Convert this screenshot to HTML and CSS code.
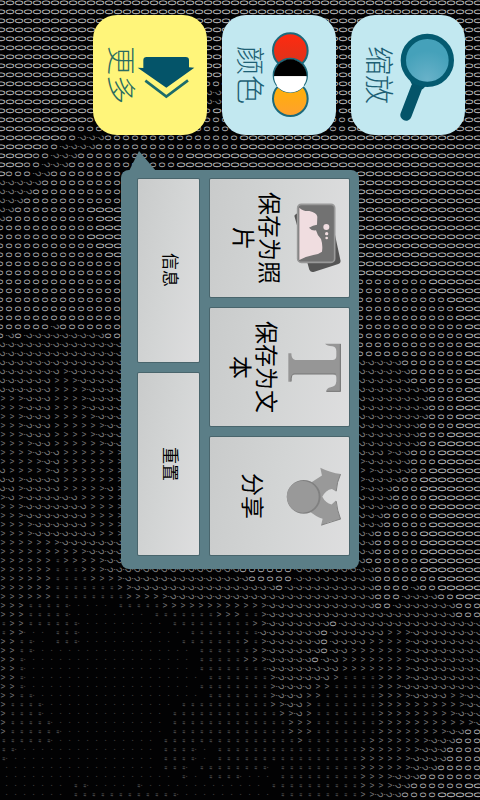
FILE: index.html
```
<!DOCTYPE html>
<html lang="zh-CN">
<head>
    <meta charset="utf-8">
    <meta name="viewport" content="width=device-width, initial-scale=1">
    <title>ASCII 相机</title>
    <link rel="stylesheet" href="styles.css">
</head>
<body>
    <div class="ascii" id="ascii" aria-hidden="true"></div>

    <div class="screen">
        <div class="toolbar">
            <button type="button" class="tool active">
                <span class="tool-label">更多</span>
                <svg class="tool-icon" viewBox="411 90 180 273">
                    <path fill="#045469" d="M430 181q0-10 10-10H557q10 0 10 10V202L583 203 499 263 413 203 430 204z"/>
                    <path fill="none" stroke="#1c6b6b" stroke-width="8" d="M436 242L499 290 564 241"/>
                </svg>
            </button>
            <button type="button" class="tool">
                <span class="tool-label">颜色</span>
                <svg class="tool-icon" viewBox="78 90 180 273">
                    <defs>
                        <linearGradient id="red" x2="0" y2="1"><stop stop-color="#ff2a10"/><stop offset="1" stop-color="#d8341c"/></linearGradient>
                        <linearGradient id="orange" x2="0" y2="1"><stop stop-color="#ffb400"/><stop offset="1" stop-color="#ffa02e"/></linearGradient>
                    </defs>
                    <g stroke="#1c6a7c" stroke-width="6">
                        <circle cx="151" cy="152" r="52" fill="url(#red)"/>
                        <circle cx="151" cy="296" r="52" fill="url(#orange)"/>
                        <circle cx="151" cy="226" r="50" fill="#fff"/>
                    </g>
                    <path fill="#000" d="M102 229a49 51 0 0 1 98 0z"/>
                    <path fill="#fff" d="M102 229a49 47 0 0 0 98 0z"/>
                    <path fill="none" stroke="#fff" stroke-width="8" d="M112 255Q151 291 190 255"/>
                </svg>
            </button>
            <button type="button" class="tool">
                <span class="tool-label">缩放</span>
                <svg class="tool-icon" viewBox="465 90 180 273">
                    <defs>
                        <radialGradient id="lens" cx="0.5" cy="0.9" r="0.6"><stop stop-color="#68b2c9"/><stop offset="1" stop-color="#45a1ba"/></radialGradient>
                    </defs>
                    <path stroke="#045469" stroke-width="34" stroke-linecap="round" d="M530 262L498 345"/>
                    <path fill="#045469" d="M508 238L520 262 548 268 560 255z"/>
                    <circle cx="562" cy="181" r="72" fill="url(#lens)" stroke="#045a70" stroke-width="16"/>
                </svg>
            </button>
        </div>

        <div class="menu">
            <div class="menu-col info">
                <button type="button" class="item small"><span class="item-label">信息</span></button>
                <button type="button" class="item small"><span class="item-label">重置</span></button>
            </div>
            <div class="menu-col">
                <button type="button" class="item">
                    <span class="item-label">保存为照片</span>
                    <svg class="icon-photo" viewBox="552 188 141 210">
                        <path fill="#555" d="M553 226q4-6 12-8L672 270 691 358q3 10-6 13L613 394q-10 4-15-6z"/>
                        <rect x="563" y="192" width="111" height="174" rx="11" fill="#727272" stroke="#999" stroke-width="5"/>
                        <path fill="#f0dde0" d="M568 202q12 12 30 10 22 5 24 17l-1 24q-12 1-24 9 8 10 21 8 4 16 15 26 6 18 3 38-10 8-26 10-24 4-42 15z"/>
                        <circle cx="649" cy="260" r="9" fill="#f0dde0"/>
                        <circle cx="650" cy="280" r="5" fill="#f0dde0"/>
                        <circle cx="650" cy="293" r="4" fill="#f0dde0"/>
                    </svg>
                </button>
                <button type="button" class="item">
                    <span class="item-label">保存为文本</span>
                    <svg class="icon-text" viewBox="534 607 159 147">
                        <path fill="#969696" d="M693 609V753H648q2-11 14-13 16-2 17-18v-11q0-11-12-11H556q-11 0-12 10v13h-9V638h9q0 18 12 20H667q12 0 12-12v-14q0-13-12-15-16-2-22-8z"/>
                        <path fill="none" stroke="#777" stroke-width="3" d="M691 610V752H650M677 700H552q-9 0-9 22"/>
                    </svg>
                </button>
                <button type="button" class="item">
                    <span class="item-label">分享</span>
                    <svg class="icon-share" viewBox="527 317 165 178">
                        <path fill="#999" d="M590 372Q612 358 635 343L630 319Q660 334 692 338 680 362 678 391L665 383Q646 386 636 407 646 426 664 430L677 418Q680 448 692 475 660 480 632 494L637 473Q615 466 595 448z"/>
                        <path fill="none" stroke="#808080" stroke-width="3" d="M691 339Q680 362 678 390M678 420Q681 448 691 474L634 492"/>
                        <circle cx="580" cy="407" r="51" fill="#808080"/>
                        <circle cx="577" cy="407" r="48" fill="#999"/>
                    </svg>
                </button>
            </div>
        </div>
    </div>

    <script src="ascii.js"></script>
</body>
</html>
```
FILE: styles.css
```
* {
    box-sizing: border-box;
}

body {
    margin: 0;
    min-height: 100vh;
    background: #020203;
    font-family: "Noto Sans CJK SC", "Noto Sans", sans-serif;
    overflow: hidden;
}

button {
    border: none;
    padding: 0;
    font-family: inherit;
    cursor: pointer;
}

/* camera view made of characters, lies under everything */
.ascii {
    position: absolute;
    top: -2px;
    left: -4px;
    display: grid;
    grid-template-columns: repeat(54, 9px);
    grid-auto-rows: 9px;
    font-family: "Liberation Sans", sans-serif;
    font-size: 10px;
    line-height: 9px;
}

.ascii span {
    writing-mode: vertical-rl;
    text-orientation: sideways;
    text-align: center;
}

.ascii .W {
    color: #c6c6c8;
    font-family: "Liberation Sans Narrow", "Liberation Sans", sans-serif;
}

.ascii .o { color: #b0b0b2; }
.ascii .q { color: #808080; }
.ascii .v { color: #747474; }
.ascii .e { color: #545454; }
.ascii .d { color: #3c3c3c; }

.screen {
    position: relative;
    display: flex;
    flex-direction: column;
    align-items: flex-end;
    gap: 35px;
    padding: 15px;
}

.toolbar {
    display: flex;
    gap: 15px;
}

.tool {
    display: flex;
    align-items: center;
    width: 114px;
    height: 120px;
    padding-left: 15px;
    border-radius: 24px;
    background: #c2e8f0;
    color: #1d6074;
}

.tool.active {
    background: #fff57a;
    color: #2a6c60;
}

.tool-label,
.item-label {
    writing-mode: vertical-rl;
    text-orientation: sideways;
}

.tool-label {
    font-size: 29px;
    line-height: 29px;
    font-weight: 300;
}

.tool-icon {
    width: 60px;
    height: 91px;
}

.menu {
    position: relative;
    display: flex;
    gap: 11px;
    margin-right: 106px;
    padding: 9px 10px 14px 17px;
    border-radius: 8px;
    background: #5b7e87;
}

.menu::before {
    content: "";
    position: absolute;
    top: -19px;
    left: 8px;
    border: solid transparent;
    border-width: 0 17px 20px 10px;
    border-bottom-color: #5b7e87;
}

.menu-col {
    display: flex;
    flex-direction: column;
    gap: 11px;
}

.item {
    display: flex;
    align-items: center;
    width: 139px;
    height: 118px;
    padding: 8px 8px 8px 12px;
    border-radius: 1px;
    background: linear-gradient(100deg, #c9cbcb, #d3d5d5 50%, #dededf);
    box-shadow: 0 0 0 1px #49656c;
    color: #000;
}

.item-label {
    flex: 1;
    display: flex;
    justify-content: center;
    align-items: center;
    height: 92px;
    font-size: 23px;
    line-height: 26px;
    text-align: center;
}

.info .item {
    flex: 1;
    width: 61px;
}

.small .item-label {
    font-size: 17px;
    line-height: 20px;
}

.icon-photo {
    width: 47px;
    height: 70px;
}

.icon-text {
    width: 53px;
    height: 49px;
}

.icon-share {
    width: 55px;
    height: 59px;
}
```
FILE: ascii.js
```
// from bright to dark
const glyphs = { W: "0", o: "o", q: "?", v: "^", e: "\"", d: "." };

// every run is a shade and the column where it ends
const rows = [
    "W", "W", "W", "W", "W", "W", "W", "W", "W",
    "W22 o25 W", "W22 q25 W", "W22 q25 W", "W22 o24 W36 o38 W",
    "W10 o39 W", "W8 o39 W",
    "W7 o9 q12 o27 W", "W5 o7 q11 o27 W", "W4 o6 q9 o21 W", "W3 o5 q8 o20 W",
    "W1 o4 q6 o14 W", "q5 o14 W", "q4 o14 W", "q3 o14 W", "q2 o10 W",
    "q1 o11 W", "o11 W", "o10 W", "o11 W", "o12 W", "o14 W", "o14 W",
    "o48 W", "o48 W", "o50 W", "o51 W", "o51 W",
    "o6 q7 o52 W", "o1 q2 o3 q12 o52 W", "q20 o52 W", "q20 o52 W",
    "q45 o52 W", "q7 v8 q46 o52 W", "q6 v9 q46 o52 W", "q6 v10 q48 o52 W",
    "v3 q6 v10 q48 o51 W", "v3 q6 v10 q48 o51 W", "v3 q6 v11 q48 o51 W",
    "v3 q6 v12 q47 o51 W", "v3 q6 v11 q47 o50 W", "v4 q6 v12 q47 o49 W",
    "v4 q7 v20 q43 v44 q46 o49 W", "v5 q7 v41 q46 o49 W",
    "q1 v6 q7 v42 q46 o48 W", "q2 v3 q7 v41 q45 o47 W",
    "q2 v3 q7 v12 q13 v41 q44 o47 W", "v1 q2 v3 q9 v20 q44 o48 W",
    "v3 q10 v20 q44 o48 W", "v3 q10 v20 q43 o48 W", "v4 q10 v20 q43 o48 W",
    "v4 q11 v20 q42 o47 W", "v7 q20 q42 o47 W", "v10 q42 o47 W",
    "v6 e7 v12 q41 o47 W",
    "v6 e9 v12 q27 o33 q42 o47 W", "v6 e10 v14 q28 o33 q42 o49 W",
    "v6 e13 v15 q31 o32 q42 o46 q47 o49 W", "v6 e14 v19 q42 o45 q49 o51 W",
    "v3 e8 d13 e18 v30 q42 o44 q51 o", "v3 e8 d17 e24 v27 e29 v30 q51 o",
    "e1 v3 e9 d19 e28 v30 q37 o38 q", "e1 v3 d6 e9 d21 e29 q36 o37 q43 v46 q",
    "v2 e4 d6 e9 d20 e27 v28 e29 v30 q36 o37 q41 v46 q",
    "v2 e4 d22 e28 v30 q36 o37 q39 v46 q", "v2 e3 d22 e27 v30 q35 o36 q38 v46 q",
    "v2 e3 d22 e30 q38 v46 q", "v2 e3 d23 e30 v31 q37 v38 e42 v46 q",
    "v2 e3 d22 e30 v31 q35 v37 e42 v45 q",
    "v2 e4 d23 e30 v31 q34 v36 e42 v46 q50 v52 q",
    "v1 e5 d20 e30 v32 q34 v35 e42 v52 q", "v1 e5 d19 e31 v33 q34 v35 e42 v51 q",
    "v1 e6 d19 e32 v35 e42 v53 q", "v1 e7 d19 e32 v35 e42 v50 q52 o",
    "e6 d18 e33 v34 e41 v48 q51 o", "e2 d18 e22 d24 e40 v47 q50 o",
    "e1 d18 e22 d24 e40 v46 q50 o", "d18 e21 d22 e30 d31 e40 v46 q49 o",
    "d20 e21 d23 e27 d31 e40 v44 q47 o", "d8 e10 d15 e16 d30 e40 v44 q46 o52 W",
    "d8 e20 d31 e40 v42 q45 o49 W"
];

function drawAscii() {
    const grid = document.getElementById("ascii");
    for (const row of rows) {
        let col = 0;
        for (const run of row.split(" ")) {
            const shade = run[0];
            const end = parseInt(run.slice(1)) || 54;
            for (; col < end; col++) {
                const cell = document.createElement("span");
                cell.className = shade;
                cell.textContent = glyphs[shade];
                grid.appendChild(cell);
            }
        }
    }
}

drawAscii();
```
